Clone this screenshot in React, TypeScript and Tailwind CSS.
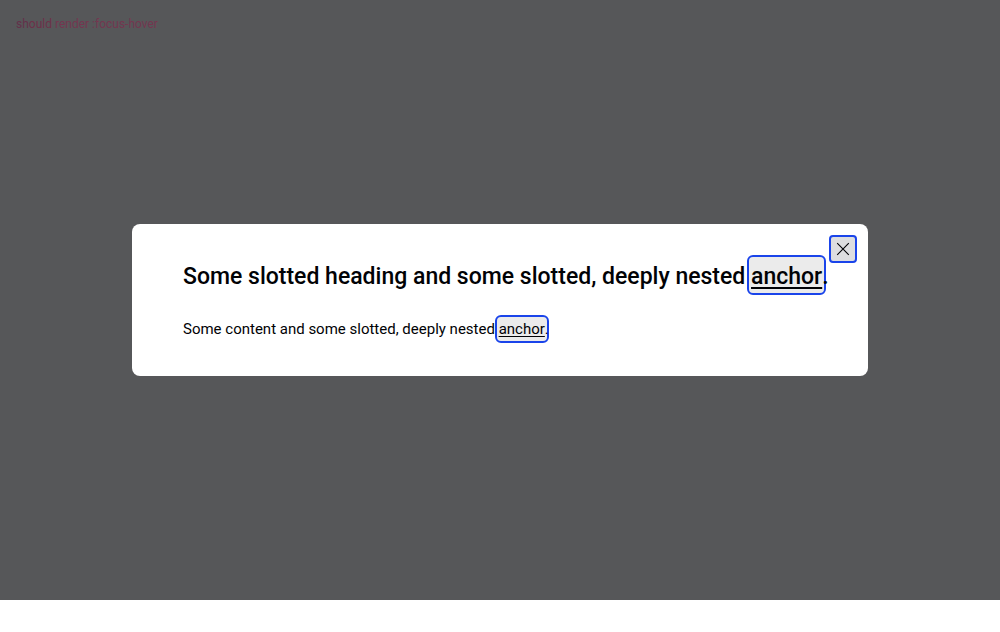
export default function App() {
  return (
    <main className="relative flex h-150 items-center bg-[#565759] px-33 font-['Roboto',sans-serif] text-[#010205]">
      <p className="absolute top-4 left-4 text-xs leading-4 text-[#743650]">
        <span className="text-[#64304a]">sh</span>
        <span className="text-[#6e3049]">ould</span> render :focus-hover
      </p>
      <section
        role="dialog"
        aria-modal="true"
        aria-labelledby="dialog-heading"
        className="relative flex w-full flex-col gap-6 rounded-lg bg-white pt-[33px] pr-8 pb-[35px] pl-[51px]"
      >
        <button
          type="button"
          aria-label="Close"
          className="absolute top-[11px] right-[11px] flex size-7 items-center justify-center rounded border-2 border-[#1a44ea] bg-[#dddee0]"
        >
          <svg viewBox="0 0 14 14" className="size-3.5" fill="none" stroke="#010205" strokeWidth="1.1" aria-hidden="true">
            <path d="M1.2 1.2l11.6 11.6M12.8 1.2L1.2 12.8" />
          </svg>
        </button>
        <h2 id="dialog-heading" className="text-[23px] leading-8 font-medium">
          Some slotted heading and some slotted, deeply nested{" "}
          <a
            href="#heading"
            className="-mx-0.5 inline-block rounded bg-[#ebebeb] px-0.5 pt-1 underline decoration-2 underline-offset-3 outline-2 outline-[#1a44ea]"
          >
            anchor
          </a>
          .
        </h2>
        <p className="text-[15px] leading-6">
          Some content and some slotted, deeply nested{" "}
          <a
            href="#content"
            className="-mx-0.5 inline-block rounded bg-[#ebebeb] px-0.5 underline underline-offset-2 outline-2 outline-[#1a44ea]"
          >
            anchor
          </a>
          .
        </p>
      </section>
    </main>
  );
}
